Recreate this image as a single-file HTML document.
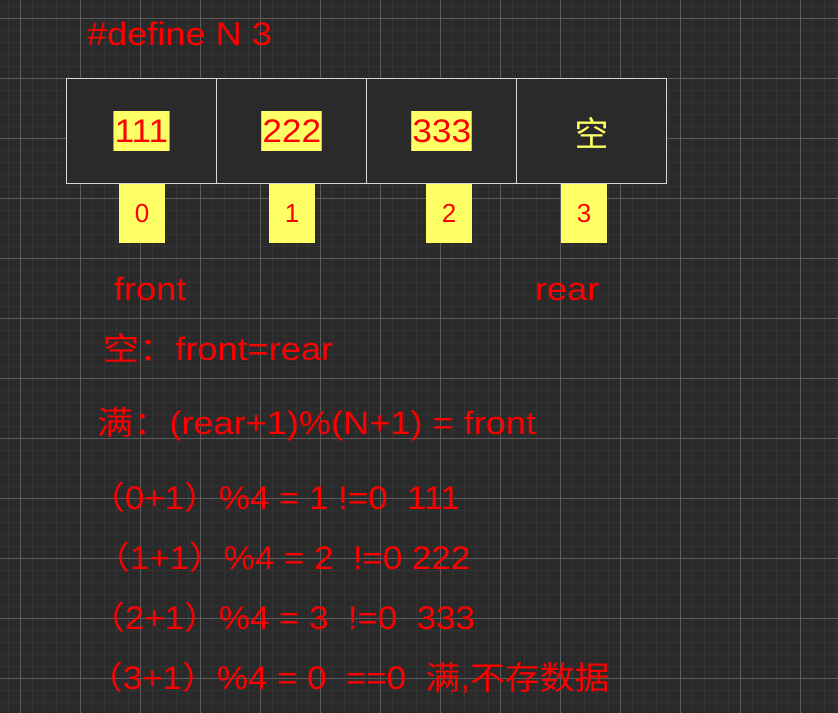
<!DOCTYPE html>
<html><head><meta charset="utf-8"><style>
html,body{margin:0;padding:0}
body{width:838px;height:713px;overflow:hidden;position:relative;
background-color:#2a2a2a;
background-image:
linear-gradient(to right,#5c5c5c 1px,transparent 1px),
linear-gradient(to bottom,#5c5c5c 1px,transparent 1px),
linear-gradient(to right,#343434 1px,transparent 1px),
linear-gradient(to bottom,#343434 1px,transparent 1px);
background-size:60px 60px,60px 60px,12px 12px,12px 12px;
background-position:20px 18px,20px 18px,8px 6px,8px 6px;
font-family:"Liberation Sans","Noto Sans CJK SC",sans-serif;color:#ff0000}
.t{position:absolute;white-space:nowrap;line-height:1;transform:scaleX(1.13);transform-origin:0 0}
.e{transform:scaleX(1.09)}
.box{position:absolute;left:66px;top:78px;width:601px;height:106px;border:1.5px solid #d8d8d8;box-sizing:border-box;display:flex;background:#2a2a2a}
.c{flex:1;border-right:1.5px solid #d8d8d8;display:flex;align-items:center;justify-content:center}
.c:last-child{border-right:none}
.hl{background:#ffff66;font-size:32px;padding:0 1px;line-height:40px;display:inline-block;transform:scaleX(1.1)}
.idx{position:absolute;top:184px;width:46px;height:59px;background:#ffff66;font-size:26px;display:flex;align-items:center;justify-content:center}
</style></head><body>
<div class="t" style="left:87px;top:18px;font-size:32px">#define N 3</div>
<div class="box">
<div class="c"><span class="hl">111</span></div>
<div class="c"><span class="hl">222</span></div>
<div class="c"><span class="hl">333</span></div>
<div class="c"><span style="color:#ffff66;font-size:34px">空</span></div>
</div>
<div class="idx" style="left:119px">0</div>
<div class="idx" style="left:269px">1</div>
<div class="idx" style="left:426px">2</div>
<div class="idx" style="left:561px">3</div>
<div class="t" style="left:114px;top:273px;font-size:32px">front</div>
<div class="t" style="left:535px;top:273px;font-size:32px">rear</div>
<div class="t" style="left:103px;top:333px;font-size:32px">空：front=rear</div>
<div class="t" style="left:97px;top:407px;font-size:32px">满：(rear+1)%(N+1) = front</div>
<div class="t e" style="left:90px;top:482px;font-size:32px">（0+1）%4 = 1 !=0&nbsp; 111</div>
<div class="t e" style="left:95px;top:542px;font-size:32px">（1+1）%4 = 2&nbsp; !=0 222</div>
<div class="t e" style="left:90px;top:602px;font-size:32px">（2+1）%4 = 3&nbsp; !=0&nbsp; 333</div>
<div class="t e" style="left:88px;top:662px;font-size:32px">（3+1）%4 = 0&nbsp; ==0&nbsp; 满,不存数据</div>
</body></html>
